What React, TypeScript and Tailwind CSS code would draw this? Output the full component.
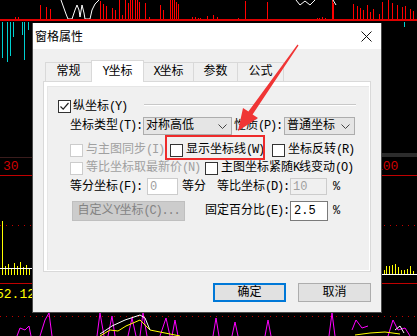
import React from 'react';

// ASCII runs get squeezed to half-width so they sit like a bitmap UI font
const T: React.FC<{ s: string }> = ({ s }) => (
  <>
    {s.split(/([\x20-\x7e]+)/).map((p, i) =>
      /^[\x20-\x7e]+$/.test(p) ? (
        <span key={i} className="tracking-[-1.2px]">{p}</span>
      ) : (
        <React.Fragment key={i}>{p}</React.Fragment>
      )
    )}
  </>
);

const topBars: [number, number][] = [
  [15, 17], [18, 17], [40, 5], [46, 7], [50, 9], [100, 1], [103, 4], [106, 6], [112, 8], [115, 10],
  [119, 0], [122, 15], [125, 0], [128, 3], [130, 0], [132, 0], [135, 0], [137, 0], [139, 2], [145, 3],
  [149, 17], [160, 5], [163, 10], [170, 0], [172, 0], [174, 0], [176, 2], [178, 4], [192, 17], [195, 17],
  [198, 18], [200, 18], [207, 16], [213, 15], [217, 17], [238, 18], [245, 1], [267, 2], [317, 18], [319, 18],
  [322, 17], [325, 18], [332, 0], [333, 3], [353, 4], [357, 6], [360, 8], [363, 10], [367, 5], [370, 12],
  [373, 9], [379, 14], [382, 2], [388, 0], [392, 3], [397, 5], [402, 7], [405, 6], [410, 9], [413, 11],
];

const cyanBars: [number, number][] = [
  [2, 58], [7, 62], [10, 56], [13, 37], [22, 35], [24, 60], [28, 30],
];

const yellowLeft: [number, number][] = [
  [5, 266], [8, 264], [11, 268], [14, 263], [17, 266], [20, 262], [23, 267], [26, 265], [29, 269],
];
const yellowRight: [number, number][] = [
  [384, 270], [386, 266], [389, 266], [392, 265], [395, 264], [398, 267], [401, 270], [404, 270], [407, 269], [410, 266], [413, 271],
];

const Chart: React.FC = () => (
  <svg className="absolute inset-0" width="417" height="336" viewBox="0 0 417 336">
    <rect width="417" height="336" fill="#000" />
    {topBars.map(([x, y], i) => (
      <rect key={i} x={x} y={y} width="1" height={19 - y} fill="#ff0000" />
    ))}
    <path d="M61 0 L66 14 L68 19 L72 19 L75 10 L77 5 L79 10 L80 17 L82 5 L84 13 L85 19 L90 19 L92 10 L95 4 L99 0" stroke="#fff" fill="none" />
    <path d="M296 0 L300 5 L305 1 L310 5 L315 0 M333 0 L336 5" stroke="#fff" fill="none" />
    <rect x="0" y="19" width="417" height="2" fill="#e00000" />
    {cyanBars.map(([x, y], i) => (
      <rect key={i} x={x} y="22" width="1" height={y - 22} fill="#00d0d0" />
    ))}
    <rect x="404" y="22" width="1" height="5" fill="#00d0d0" />
    <line x1="0" y1="157.5" x2="32" y2="157.5" stroke="#3a1c1c" />
    <rect x="382" y="153" width="35" height="4" fill="#2c2c2c" />
    <text x="3" y="170" fill="#d00000" fontSize="13" fontFamily="Liberation Mono, monospace">30</text>
    <text x="375" y="170" fill="#d00000" fontSize="13" fontFamily="Liberation Mono, monospace">100</text>
    <line x1="0" y1="175.5" x2="417" y2="175.5" stroke="#c00000" />
    <line x1="0" y1="225.5" x2="417" y2="225.5" stroke="#c00000" strokeDasharray="1 5" />
    <rect x="2" y="221" width="1" height="54" fill="#ffff00" />
    {yellowLeft.map(([x, y], i) => (
      <rect key={i} x={x} y={y} width="1" height={275 - y} fill="#ffff00" />
    ))}
    {yellowRight.map(([x, y], i) => (
      <rect key={i} x={x} y={y} width="1" height={274 - y} fill="#ffff00" />
    ))}
    <line x1="0" y1="268.5" x2="32" y2="268.5" stroke="#fff" />
    <line x1="382" y1="274.5" x2="417" y2="274.5" stroke="#fff" />
    <line x1="0" y1="283.5" x2="417" y2="283.5" stroke="#c00000" />
    <text x="-4" y="298" fill="#ffff00" fontSize="13" fontFamily="Liberation Mono, monospace">52.12</text>
    <line x1="0" y1="316.5" x2="417" y2="316.5" stroke="#c00000" strokeDasharray="1 5" />
    <path
      d="M17 336 L20 328 L25 330 L29 326 L31 336 M40 336 L45 320 L49 313 L52 336 M97 336 L100 313 L104 336 M108 336 L112 316 L115 336 M128 336 L132 318 L136 336 M140 336 L143 313 L147 336 M160 336 L166 318 L170 336 M172 336 L175 320 L178 336 M213 336 L216 318 L219 336 M232 336 L235 322 L238 336 M265 336 L268 320 L271 336 M329 336 L332 313 L335 336 M352 330 L356 320 L362 328 L368 326 M388 336 L393 320 L398 330 L405 328 L410 336"
      stroke="#ff00ff"
      fill="none"
    />
    <path d="M100 336 L110 330 L118 331 L126 326 L140 320 L150 330 L165 333 L180 336 M355 335 L370 333 L385 332 L400 334" stroke="#ffff00" fill="none" />
    <path d="M100 334 L112 326 L125 320 L140 315 L145 318 L150 330 M395 330 L400 326 L404 333" stroke="#fff" fill="none" />
  </svg>
);

const Check: React.FC<{ checked?: boolean; disabled?: boolean }> = ({ checked, disabled }) => (
  <div
    className={`w-[13px] h-[13px] shrink-0 border bg-white flex items-center justify-center ${
      disabled ? 'border-[#cccccc]' : 'border-[#333333]'
    }`}
  >
    {checked && (
      <svg width="11" height="11" viewBox="0 0 11 11">
        <path d="M1.5 5.5 L4.2 8.2 L9.5 2" stroke="#222" strokeWidth="1.2" fill="none" />
      </svg>
    )}
  </div>
);

const Select: React.FC<{ w: string; value: string }> = ({ w, value }) => (
  <div className={`${w} h-[18px] border border-[#adadad] bg-[#e5e5e5] flex items-center justify-between pl-[2px] pr-[4px]`}>
    <span>{value}</span>
    <svg width="9" height="5" viewBox="0 0 9 5">
      <path d="M0.5 0.5 L4.5 4.5 L8.5 0.5" stroke="#444" fill="none" />
    </svg>
  </div>
);

const Tab: React.FC<{ label: string; w: string; active?: boolean }> = ({ label, w, active }) => (
  <div
    className={`${w} flex items-center justify-center border border-[#d9d9d9] -mr-px ${
      active ? 'h-[22px] bg-white border-b-0 relative z-10 -mb-px' : 'h-[19px] bg-[#f0f0f0] border-b-0'
    }`}
  >
    <T s={label} />
  </div>
);

export default function App() {
  return (
    <div className="relative w-[417px] h-[336px] overflow-hidden bg-black font-['Liberation_Mono','Noto_Sans_CJK_SC',monospace] text-[12px] leading-none text-black">
      <Chart />

      <div className="absolute left-[32px] top-[23px] w-[350px] h-[290px] border border-[#4a4a4a] border-t-0 bg-[#f0f0f0] flex flex-col">
        <div className="h-[26px] bg-white flex items-center justify-between pl-[2px] pr-[9px]">
          <span className="font-['Noto_Sans_CJK_SC',sans-serif] text-[12px]">窗格属性</span>
          <svg width="11" height="11" viewBox="0 0 11 11">
            <path d="M0.5 0.5 L10.5 10.5 M10.5 0.5 L0.5 10.5" stroke="#111" fill="none" />
          </svg>
        </div>

        <div className="flex-1 flex flex-col px-[10px] pt-[11px]">
          <div className="flex items-end ml-[2px] h-[21px]">
            <Tab label="常规" w="w-[47px]" />
            <Tab label="Y坐标" w="w-[53px]" active />
            <Tab label="X坐标" w="w-[51px]" />
            <Tab label="参数" w="w-[45px]" />
            <Tab label="公式" w="w-[47px]" />
          </div>

          <div className="h-[191px] border border-[#d9d9d9] bg-white pl-[3px] pt-[4px] pr-px pb-px">
            <div className="h-full bg-[#f0f0f0] border-l border-t border-[#e6e6e6] flex flex-col pt-[11px]">
              <div className="h-[17px] flex items-center pl-[10px] pr-[13px]">
                <Check checked />
                <span className="ml-[2px]"><T s="纵坐标(Y)" /></span>
                <div className="ml-auto w-[212px] self-start mt-[6px] border-t border-[#c8c8c8] border-b border-b-white" />
              </div>

              <div className="h-[18px] mt-[2px] flex items-center pl-[22px]">
                <span className="w-[73px]"><T s="坐标类型(T):" /></span>
                <Select w="w-[89px]" value="对称高低" />
                <span className="w-[52px] pl-[2px]"><T s="性质(P):" /></span>
                <Select w="w-[71px]" value="普通坐标" />
              </div>

              <div className="h-[14px] mt-[8px] flex items-center pl-[22px]">
                <div className="w-[100px] flex items-center text-[#a0a0a0]">
                  <Check disabled />
                  <span className="ml-[3px]"><T s="与主图同步(I)" /></span>
                </div>
                <div className="w-[102px] flex items-center">
                  <Check />
                  <span className="ml-[3px]"><T s="显示坐标线(W)" /></span>
                </div>
                <Check />
                <span className="ml-[3px]"><T s="坐标反转(R)" /></span>
              </div>

              <div className="h-[14px] mt-[4px] flex items-center pl-[22px]">
                <div className="w-[135px] flex items-center text-[#a0a0a0]">
                  <Check disabled />
                  <span className="ml-[3px]"><T s="等比坐标取最新价(N)" /></span>
                </div>
                <Check />
                <span className="ml-[3px]"><T s="主图坐标紧随K线变动(O)" /></span>
              </div>

              <div className="h-[17px] mt-[3px] flex items-center pl-[22px]">
                <span className="w-[77px]"><T s="等分坐标(F):" /></span>
                <div className="w-[31px] h-[17px] border border-[#cccccc] bg-white text-[#a0a0a0] flex items-center pl-[2px]">0</div>
                <span className="ml-[4px] w-[35px]">等分</span>
                <span className="w-[73px]"><T s="等比坐标(D):" /></span>
                <div className="w-[37px] h-[17px] border border-[#cccccc] bg-[#f0f0f0] text-[#a0a0a0] flex items-center pl-[2px]">10</div>
                <span className="ml-[6px]">%</span>
              </div>

              <div className="h-[20px] mt-[6px] flex items-center pl-[24px]">
                <div className="w-[113px] h-[20px] border border-[#bfbfbf] bg-[#cccccc] text-[#838383] flex items-center justify-center">
                  <T s="自定义Y坐标(C)..." />
                </div>
                <span className="ml-[20px] w-[85px]"><T s="固定百分比(E):" /></span>
                <div className="w-[38px] h-[20px] border border-[#7a7a7a] bg-white flex items-center pl-[3px]">2.5</div>
                <span className="ml-[5px]">%</span>
              </div>
            </div>
          </div>

          <div className="mt-[11px] flex justify-end gap-[12px]">
            <div className="w-[73px] h-[19px] border-2 border-[#0078d7] bg-[#e1e1e1] flex items-center justify-center">确定</div>
            <div className="w-[73px] h-[19px] border border-[#adadad] bg-[#e1e1e1] flex items-center justify-center">取消</div>
          </div>
        </div>
      </div>

      {/* annotation: red box + arrow */}
      <div className="absolute left-[165px] top-[135px] w-[100px] h-[25px] border-2 border-[#ee2b2b]" />
      <svg className="absolute inset-0 pointer-events-none" width="417" height="336" viewBox="0 0 417 336">
        <polygon
          points="298.5,45.5 252.6,114.4 258,118 238,131 243,108 248.4,111.6 297.5,44.5"
          fill="#f03535"
        />
      </svg>
    </div>
  );
}
